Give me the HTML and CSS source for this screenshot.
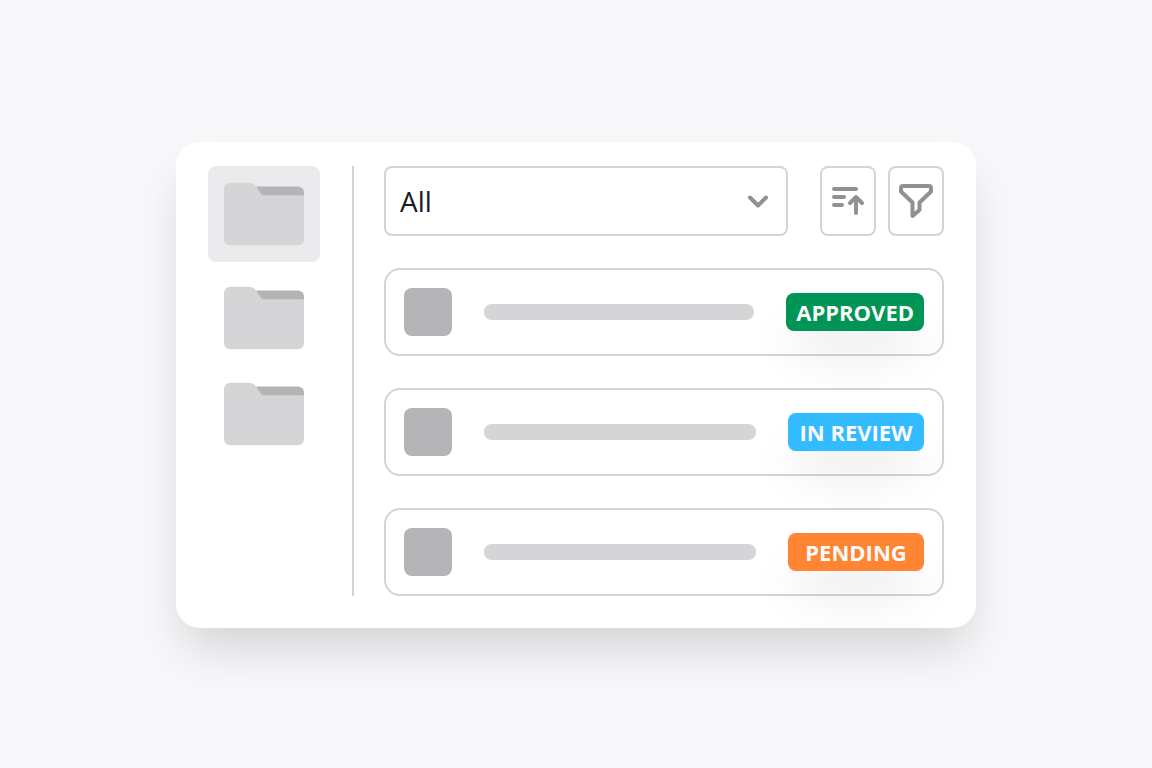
FILE: index.html
```html
<!DOCTYPE html>
<html lang="en">
<head>
    <meta charset="UTF-8">
    <meta name="viewport" content="width=device-width, initial-scale=1.0">
    <title>Documents</title>
    <link rel="stylesheet" href="styles.css">
</head>
<body>
    <svg class="sprite" aria-hidden="true">
        <symbol id="folder" viewBox="0 0 80 64">
            <path fill="#b4b4b6" d="M28 4.500h46a6 6 0 0 1 6 6v6H28z"/>
            <path fill="#d5d5d7" d="M6 .7h19c3 0 4.500 1 6.500 3l5 7.500c1 1.500 1.500 2 3.500 2h40V57.200a6 6 0 0 1-6 6H6a6 6 0 0 1-6-6V6.700a6 6 0 0 1 6-6z"/>
        </symbol>
    </svg>

    <main class="card">
        <nav class="folders" aria-label="Folders">
            <button class="folder active" aria-label="Folder 1"><svg><use href="#folder"/></svg></button>
            <button class="folder" aria-label="Folder 2"><svg><use href="#folder"/></svg></button>
            <button class="folder" aria-label="Folder 3"><svg><use href="#folder"/></svg></button>
        </nav>

        <section class="content">
            <div class="toolbar">
                <div class="select">
                    <select aria-label="Status">
                        <option>All</option>
                        <option>Approved</option>
                        <option>In review</option>
                        <option>Pending</option>
                    </select>
                    <svg class="chevron" viewBox="0 0 24 24"><path d="M4 8.500l8 8 8-8"/></svg>
                </div>
                <div class="actions">
                    <button class="icon-button" aria-label="Sort">
                        <svg viewBox="0 0 36 36"><path d="M4 6h22M4 14h10M4 22h8M26 30V15M20 20l6-6 6 6"/></svg>
                    </button>
                    <button class="icon-button" aria-label="Filter">
                        <svg viewBox="0 0 36 36"><path d="M5 3h26a2 2 0 0 1 2 2v3.500L21.500 19.500V27L14.500 33V19.500L3 8.500V5a2 2 0 0 1 2-2z"/></svg>
                    </button>
                </div>
            </div>

            <div class="row">
                <span class="thumb"></span>
                <span class="line"></span>
                <span class="badge approved">APPROVED</span>
            </div>
            <div class="row">
                <span class="thumb"></span>
                <span class="line"></span>
                <span class="badge review">IN REVIEW</span>
            </div>
            <div class="row">
                <span class="thumb"></span>
                <span class="line"></span>
                <span class="badge pending">PENDING</span>
            </div>
        </section>
    </main>
</body>
</html>
```
FILE: styles.css
```css
* {
    box-sizing: border-box;
}

body {
    font-family: 'Open Sans', 'Noto Sans', sans-serif;
    background-color: #f8f8fa;
    margin: 0;
    padding: 2px 16px 0;
    min-height: 100vh;
    display: flex;
    justify-content: center;
    align-items: center;
}

button,
select {
    font: inherit;
    cursor: pointer;
}

.sprite {
    display: none;
}

.card {
    background-color: #fff;
    width: 100%;
    max-width: 800px;
    border-radius: 24px;
    padding: 24px 32px 32px;
    box-shadow: 0 28px 48px -8px rgba(0, 0, 0, 0.15);
    display: flex;
    overflow: hidden;
}

.folders {
    display: flex;
    flex-direction: column;
    padding-right: 32px;
    border-right: 2px solid #d4d4d4;
}

.folder {
    display: flex;
    background: none;
    border: none;
    border-radius: 8px;
    padding: 16px;
}

.folder.active {
    background-color: #ebebed;
    margin-bottom: 8px;
}

.folder svg {
    width: 80px;
    height: 64px;
}

.content {
    flex: 1;
    display: flex;
    flex-direction: column;
    gap: 32px;
    padding-left: 30px;
}

.toolbar {
    display: flex;
    gap: 32px;
    height: 70px;
}

.select {
    flex: 1;
    display: grid;
    align-items: center;
}

.select select,
.chevron {
    grid-area: 1 / 1;
}

.select select {
    appearance: none;
    width: 100%;
    height: 70px;
    background-color: #fff;
    color: #1c1c1e;
    font-size: 28px;
    border: 2px solid #d4d4d4;
    border-radius: 8px;
    padding: 0 48px 0 14px;
}

.chevron {
    width: 24px;
    height: 24px;
    justify-self: end;
    margin-right: 18px;
    pointer-events: none;
}

.chevron,
.icon-button svg {
    fill: none;
    stroke: #919193;
    stroke-width: 4;
    stroke-linecap: round;
    stroke-linejoin: round;
}

.actions {
    display: flex;
    gap: 12px;
}

.icon-button {
    display: flex;
    justify-content: center;
    align-items: center;
    width: 56px;
    padding: 0;
    background-color: #fff;
    border: 2px solid #d4d4d4;
    border-radius: 8px;
}

.icon-button svg {
    width: 36px;
    height: 36px;
}

.row {
    display: flex;
    align-items: center;
    gap: 32px;
    padding: 18px;
    border: 2px solid #d4d4d4;
    border-radius: 16px;
}

.thumb {
    width: 48px;
    height: 48px;
    border-radius: 8px;
    background-color: #b4b4b6;
}

.line {
    flex: 1;
    height: 16px;
    border-radius: 8px;
    background-color: #d5d5d7;
}

.badge {
    min-width: 136px;
    padding: 0 10px;
    border-radius: 8px;
    color: #fafafa;
    font-size: 22px;
    font-weight: 700;
    line-height: 38px;
    text-align: center;
    box-shadow: 0 28px 48px -8px rgba(0, 0, 0, 0.12);
}

.approved {
    background-color: #009456;
}

.review {
    background-color: #33bbff;
}

.pending {
    background-color: #ff8533;
}
```
